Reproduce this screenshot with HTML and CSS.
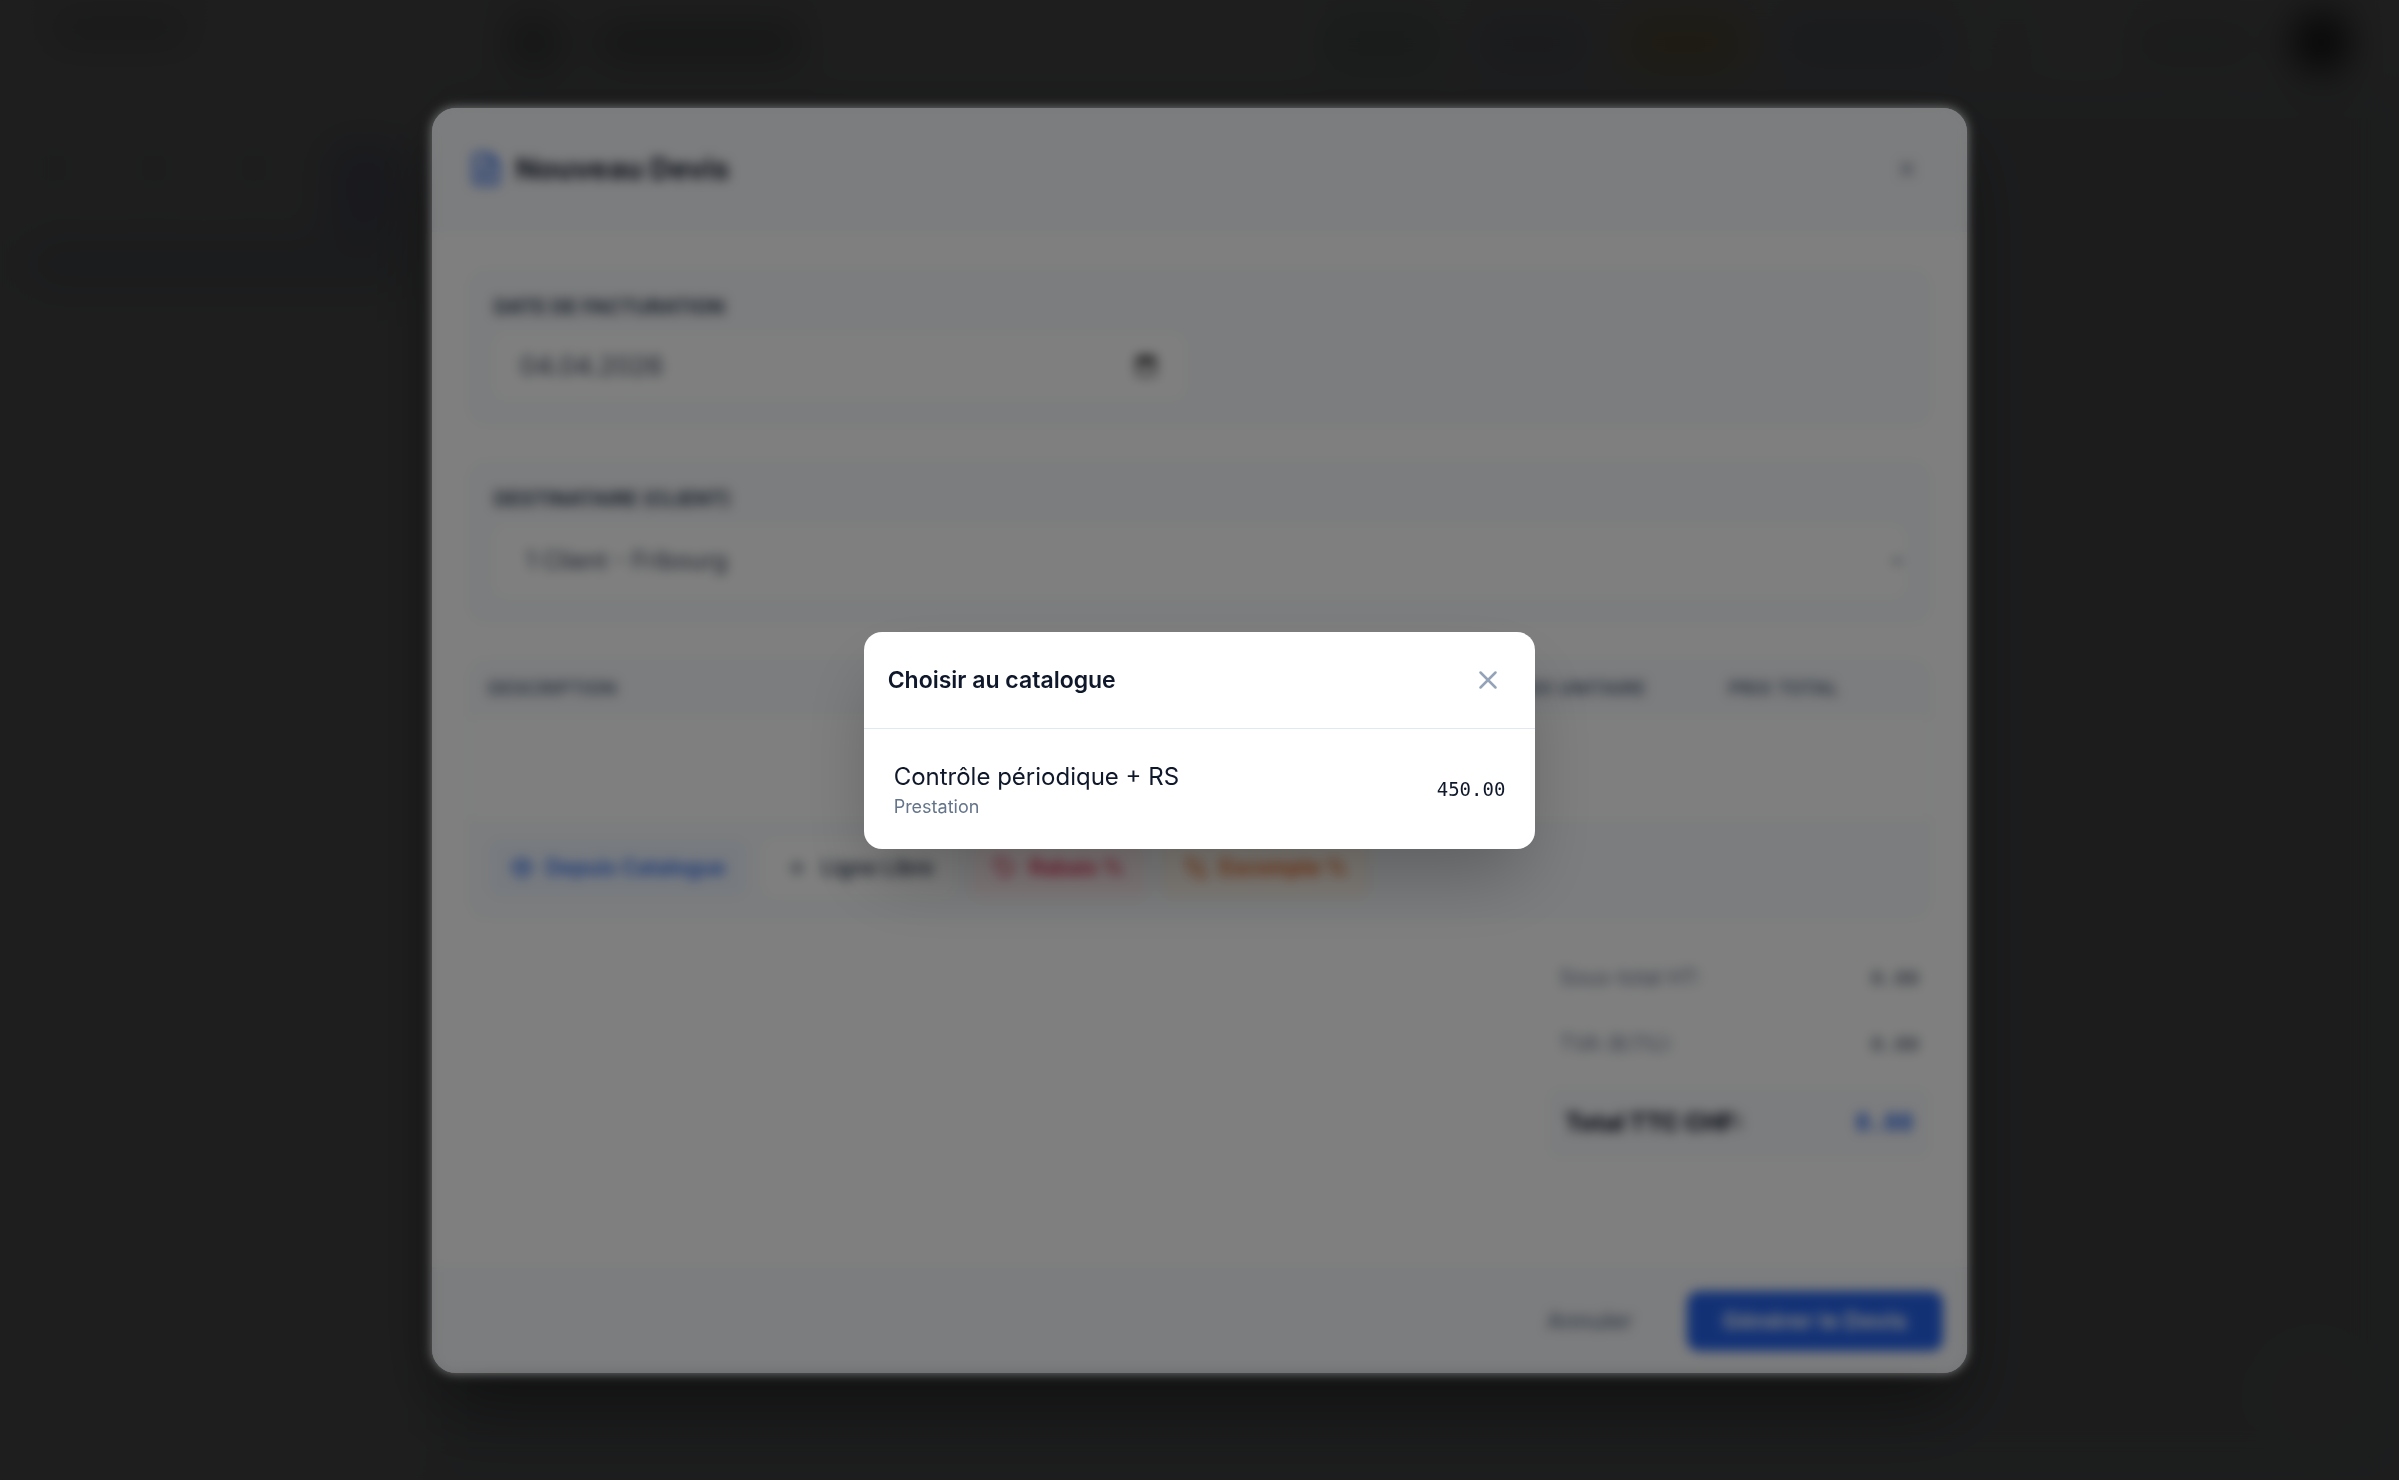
FILE: index.html
```html
<!DOCTYPE html>
<html lang="fr">
<head>
    <meta charset="UTF-8">
    <meta name="viewport" content="width=device-width, initial-scale=1.0">
    <title>Nouveau Devis</title>
    <link rel="stylesheet" href="styles.css">
</head>
<body>
    <div class="app">
        <aside class="sidebar">
            <div class="sidebar-title"></div>
            <div class="days">
                <span></span><span></span><span></span><span class="today"></span>
            </div>
            <div class="sidebar-card"></div>
        </aside>
        <div class="content">
            <header class="topbar">
                <span class="logo"></span>
                <span class="brand"></span>
                <span class="spacer"></span>
                <span class="chip chip-green"></span>
                <span class="chip chip-blue"></span>
                <span class="chip chip-yellow"></span>
                <span class="chip chip-sky"></span>
                <span class="bell"></span>
                <span class="account"></span>
                <span class="avatar"></span>
            </header>
        </div>
        <div class="fab"></div>
    </div>

    <div class="overlay overlay-page">
        <div class="modal" role="dialog" aria-labelledby="devisTitle">
            <div class="modal-header">
                <h2 id="devisTitle">
                    <svg class="icon-title" viewBox="0 0 24 24"><path d="M14 2H6a2 2 0 0 0-2 2v16a2 2 0 0 0 2 2h12a2 2 0 0 0 2-2V8z"/><path d="M14 2v6h6M8 13h8M8 17h8M8 9h2"/></svg>
                    Nouveau Devis
                </h2>
                <button type="button" class="close" aria-label="Fermer">
                    <svg viewBox="0 0 24 24"><path d="M18 6 6 18M6 6l12 12"/></svg>
                </button>
            </div>

            <div class="modal-body">
                <div class="field">
                    <label for="dateFacturation">Date de facturation</label>
                    <div class="date-box">
                        <input type="text" id="dateFacturation" value="04.04.2026">
                        <svg viewBox="0 0 24 24"><path d="M4 5h16v15H4z"/><path class="solid" d="M4 5h16v4H4z"/><path d="M8 2v3M16 2v3"/></svg>
                    </div>
                </div>

                <div class="field">
                    <label for="client">Destinataire (Client)</label>
                    <select id="client">
                        <option>1 Client - Fribourg</option>
                    </select>
                </div>

                <div class="lines">
                    <table>
                        <thead>
                            <tr>
                                <th>Description</th>
                                <th class="col-qty">Qté</th>
                                <th class="col-unit">Prix unitaire</th>
                                <th class="col-total">Prix total</th>
                            </tr>
                        </thead>
                        <tbody>
                            <tr><td colspan="4"></td></tr>
                        </tbody>
                    </table>
                    <div class="actions">
                        <button type="button" class="btn btn-blue">
                            <svg viewBox="0 0 24 24"><path d="m21 8-9-5-9 5v8l9 5 9-5zM3 8l9 5 9-5M12 13v8M7 5l9 5"/></svg>
                            Depuis Catalogue
                        </button>
                        <button type="button" class="btn btn-white">
                            <svg viewBox="0 0 24 24"><path d="M12 5v14M5 12h14"/></svg>
                            Ligne Libre
                        </button>
                        <button type="button" class="btn btn-red">
                            <svg viewBox="0 0 24 24"><path d="M3 3h9l9 9-9 9-9-9zM7 7h1"/></svg>
                            Rabais %
                        </button>
                        <button type="button" class="btn btn-orange">
                            <svg viewBox="0 0 24 24"><path d="M19 5 5 19"/><circle cx="6" cy="6" r="3"/><circle cx="18" cy="18" r="3"/></svg>
                            Escompte %
                        </button>
                    </div>
                </div>

                <dl class="totals">
                    <div><dt>Sous-total HT:</dt><dd>0.00</dd></div>
                    <div><dt>TVA (8.1%):</dt><dd>0.00</dd></div>
                    <div class="grand"><dt>Total TTC CHF:</dt><dd>0.00</dd></div>
                </dl>
            </div>

            <div class="modal-footer">
                <button type="button" class="cancel">Annuler</button>
                <button type="button" class="submit">Générer le Devis</button>
            </div>
        </div>

        <!-- Catalogue -->
        <div class="overlay overlay-catalog">
            <div class="catalog" role="dialog" aria-labelledby="catalogTitle">
                <div class="catalog-header">
                    <h3 id="catalogTitle">Choisir au catalogue</h3>
                    <button type="button" class="close" aria-label="Fermer">
                        <svg viewBox="0 0 24 24"><path d="M18 6 6 18M6 6l12 12"/></svg>
                    </button>
                </div>
                <div class="catalog-list">
                    <button type="button" class="catalog-item">
                        <span class="item-text">
                            <span class="item-name">Contrôle périodique + RS</span>
                            <span class="item-type">Prestation</span>
                        </span>
                        <span class="item-price">450.00</span>
                    </button>
                </div>
            </div>
        </div>
    </div>
</body>
</html>
```
FILE: styles.css
```css
* {
    box-sizing: border-box;
}

body {
    margin: 0;
    font-family: Inter, 'Open Sans', sans-serif;
    color: #0f172a;
    background-color: #ececf0;
    overflow: hidden;
}

button,
input,
select {
    font-family: inherit;
    color: inherit;
}

button {
    border: none;
    background: none;
    cursor: pointer;
}

svg {
    fill: none;
    stroke: currentColor;
    stroke-width: 2;
    stroke-linecap: round;
    stroke-linejoin: round;
}

/* Page */
.app {
    display: flex;
    height: 100vh;
    filter: blur(20px);
}

.sidebar {
    width: 18%;
    padding: 18px 24px;
    background-color: #f3f3f3;
}

.sidebar-title {
    width: 144px;
    height: 24px;
    margin-left: 24px;
    border-radius: 12px;
    background-color: #bbbdbf;
}

.days {
    display: flex;
    justify-content: space-between;
    margin-top: 96px;
}

.days span {
    width: 60px;
    height: 60px;
    border-radius: 16px;
    background-color: #eaebeb;
}

.days .today {
    width: 84px;
    height: 96px;
    background-color: #ccd1f0;
}

.sidebar-card {
    height: 60px;
    border-radius: 16px;
    background-color: #d8deea;
}

.content {
    flex: 1;
    background-color: #e0e5ec;
}

.topbar {
    display: flex;
    align-items: center;
    gap: 32px;
    height: 84px;
    padding: 0 50px 0 74px;
    background-color: #f3f4f4;
}

.logo {
    width: 56px;
    height: 48px;
    border-radius: 12px;
    background-color: #a3a6a8;
}

.brand {
    width: 210px;
    height: 32px;
    border-radius: 12px;
    background-color: #a3a6a8;
}

.spacer {
    flex: 1;
}

.chip {
    width: 120px;
    height: 48px;
    border-radius: 12px;
}

.chip-green {
    background-color: #bfe0d0;
}

.chip-blue {
    background-color: #d0d6f0;
}

.chip-yellow {
    background-color: #eed690;
}

.chip-sky {
    width: 180px;
    background-color: #d0dbea;
}

.bell {
    width: 48px;
    height: 48px;
    border-radius: 50%;
    background-color: #dde4e6;
}

.account {
    width: 130px;
    height: 32px;
    margin-left: 62px;
    border-radius: 12px;
    background-color: #cccfd1;
}

.avatar {
    width: 56px;
    height: 56px;
    border-radius: 50%;
    background-color: #111;
}

.fab {
    position: fixed;
    right: 36px;
    bottom: 36px;
    width: 96px;
    height: 96px;
    border-radius: 50%;
    background-color: #ebebe8;
}

/* Overlays */
.overlay {
    position: fixed;
    inset: 0;
    display: flex;
    align-items: center;
    justify-content: center;
}

.overlay-page {
    backdrop-filter: brightness(0.25);
}

.overlay-catalog {
    background-color: rgba(0, 0, 0, 0.5);
    backdrop-filter: blur(6px);
}

.close {
    display: flex;
    padding: 12px;
    color: #94a3b8;
}

.close svg {
    width: 30px;
    height: 30px;
}

/* Devis */
.modal {
    display: flex;
    flex-direction: column;
    width: 64%;
    border-radius: 24px;
    overflow: hidden;
    background-color: white;
    box-shadow: 0 36px 72px -12px rgba(0, 0, 0, 0.25);
}

.modal-header {
    display: flex;
    align-items: center;
    justify-content: space-between;
    padding: 37px 36px;
    border-bottom: 2px solid #f1f5f9;
    background-color: #f8fafc;
}

.modal-header h2 {
    display: flex;
    align-items: center;
    gap: 12px;
    margin: 0;
    font-size: 29px;
    line-height: 48px;
}

.icon-title {
    width: 36px;
    height: 36px;
    color: #2563eb;
}

.modal-header .close {
    color: #64748b;
}

.modal-header .close svg {
    width: 24px;
    height: 24px;
}

.modal-body {
    padding: 37px 36px 108px;
}

.field {
    margin-bottom: 36px;
    padding: 24px;
    border: 2px solid #f1f5f9;
    border-radius: 18px;
    background-color: #f8fafc;
}

.field label {
    display: block;
    margin-bottom: 14px;
    color: #334155;
    font-size: 20px;
    font-weight: 700;
    line-height: 24px;
    text-transform: uppercase;
}

.date-box {
    display: flex;
    align-items: center;
    width: 49%;
    height: 66px;
    padding: 0 26px;
    border-radius: 12px;
    background-color: white;
}

.date-box input {
    flex: 1;
    padding: 0;
    border: none;
    outline: none;
    background: none;
    color: #334155;
    font-size: 26px;
}

.date-box svg {
    width: 26px;
    height: 26px;
    color: #222;
}

.date-box .solid {
    fill: currentColor;
}

.field select {
    width: 100%;
    height: 72px;
    padding: 0 28px;
    border: none;
    border-radius: 12px;
    background-color: white;
    color: #334155;
    font-size: 24px;
}

.lines {
    border: 2px solid #f1f5f9;
    border-radius: 18px;
    overflow: hidden;
}

.lines table {
    width: 100%;
    border-collapse: collapse;
    table-layout: fixed;
}

.lines th {
    height: 56px;
    padding: 0 18px;
    background-color: #f8fafc;
    color: #64748b;
    font-size: 19px;
    font-weight: 700;
    text-align: left;
    text-transform: uppercase;
    white-space: nowrap;
}

.lines td {
    height: 102px;
}

.col-qty {
    width: 14%;
}

.col-unit {
    width: 15%;
}

.col-total {
    width: 15%;
}

.actions {
    display: flex;
    gap: 16px;
    padding: 20px 18px;
    background-color: #f8fafc;
}

.btn {
    display: flex;
    align-items: center;
    gap: 12px;
    height: 58px;
    padding: 0 22px;
    border-radius: 12px;
    font-size: 21px;
    font-weight: 600;
}

.btn svg {
    width: 24px;
    height: 24px;
}

.btn-blue {
    background-color: #eff6ff;
    color: #2563eb;
}

.btn-white {
    background-color: white;
    color: #334155;
}

.btn-red {
    background-color: #fff1f2;
    color: #e11d48;
}

.btn-orange {
    background-color: #fff7ed;
    color: #ea580c;
}

.totals {
    width: 384px;
    margin: 26px 0 0 auto;
    color: #64748b;
    font-size: 21px;
}

.totals div {
    display: flex;
    align-items: center;
    justify-content: space-between;
    height: 66px;
    padding: 0 12px;
}

.totals dd {
    margin: 0;
    color: #334155;
    font-family: 'DejaVu Sans Mono', monospace;
    font-size: 20px;
}

.totals .grand {
    height: 72px;
    margin-top: 10px;
    padding: 0 18px;
    border-radius: 12px;
    background-color: #f8fafc;
    color: #0f172a;
    font-size: 24px;
    font-weight: 800;
}

.totals .grand dd {
    color: #2563eb;
    font-size: 24px;
}

.modal-footer {
    display: flex;
    justify-content: flex-end;
    gap: 18px;
    padding: 22px 24px;
    border-top: 2px solid #f1f5f9;
    background-color: #f8fafc;
}

.modal-footer button {
    height: 60px;
    padding: 0 36px;
    border-radius: 12px;
    font-size: 23px;
}

.cancel {
    color: #64748b;
    font-weight: 500;
}

.modal-footer .submit {
    background-color: #2563eb;
    color: white;
    font-weight: 700;
}

/* Catalogue */
.catalog {
    width: 28%;
    border-radius: 18px;
    background-color: white;
    box-shadow: 0 36px 72px -12px rgba(0, 0, 0, 0.25);
}

.catalog-header {
    display: flex;
    align-items: center;
    justify-content: space-between;
    padding: 21px 20px 21px 24px;
    border-bottom: 1px solid #e2e8f0;
}

.catalog-header h3 {
    margin: 0;
    font-size: 23px;
    font-weight: 600;
}

.catalog-list {
    padding: 12px;
}

.catalog-item {
    display: flex;
    align-items: center;
    justify-content: space-between;
    width: 100%;
    padding: 18px;
    text-align: left;
}

.item-text {
    display: flex;
    flex-direction: column;
}

.item-name {
    font-size: 24px;
    line-height: 36px;
}

.item-type {
    color: #64748b;
    font-size: 18px;
    line-height: 24px;
}

.item-price {
    font-family: 'DejaVu Sans Mono', monospace;
    font-size: 19px;
}
```
